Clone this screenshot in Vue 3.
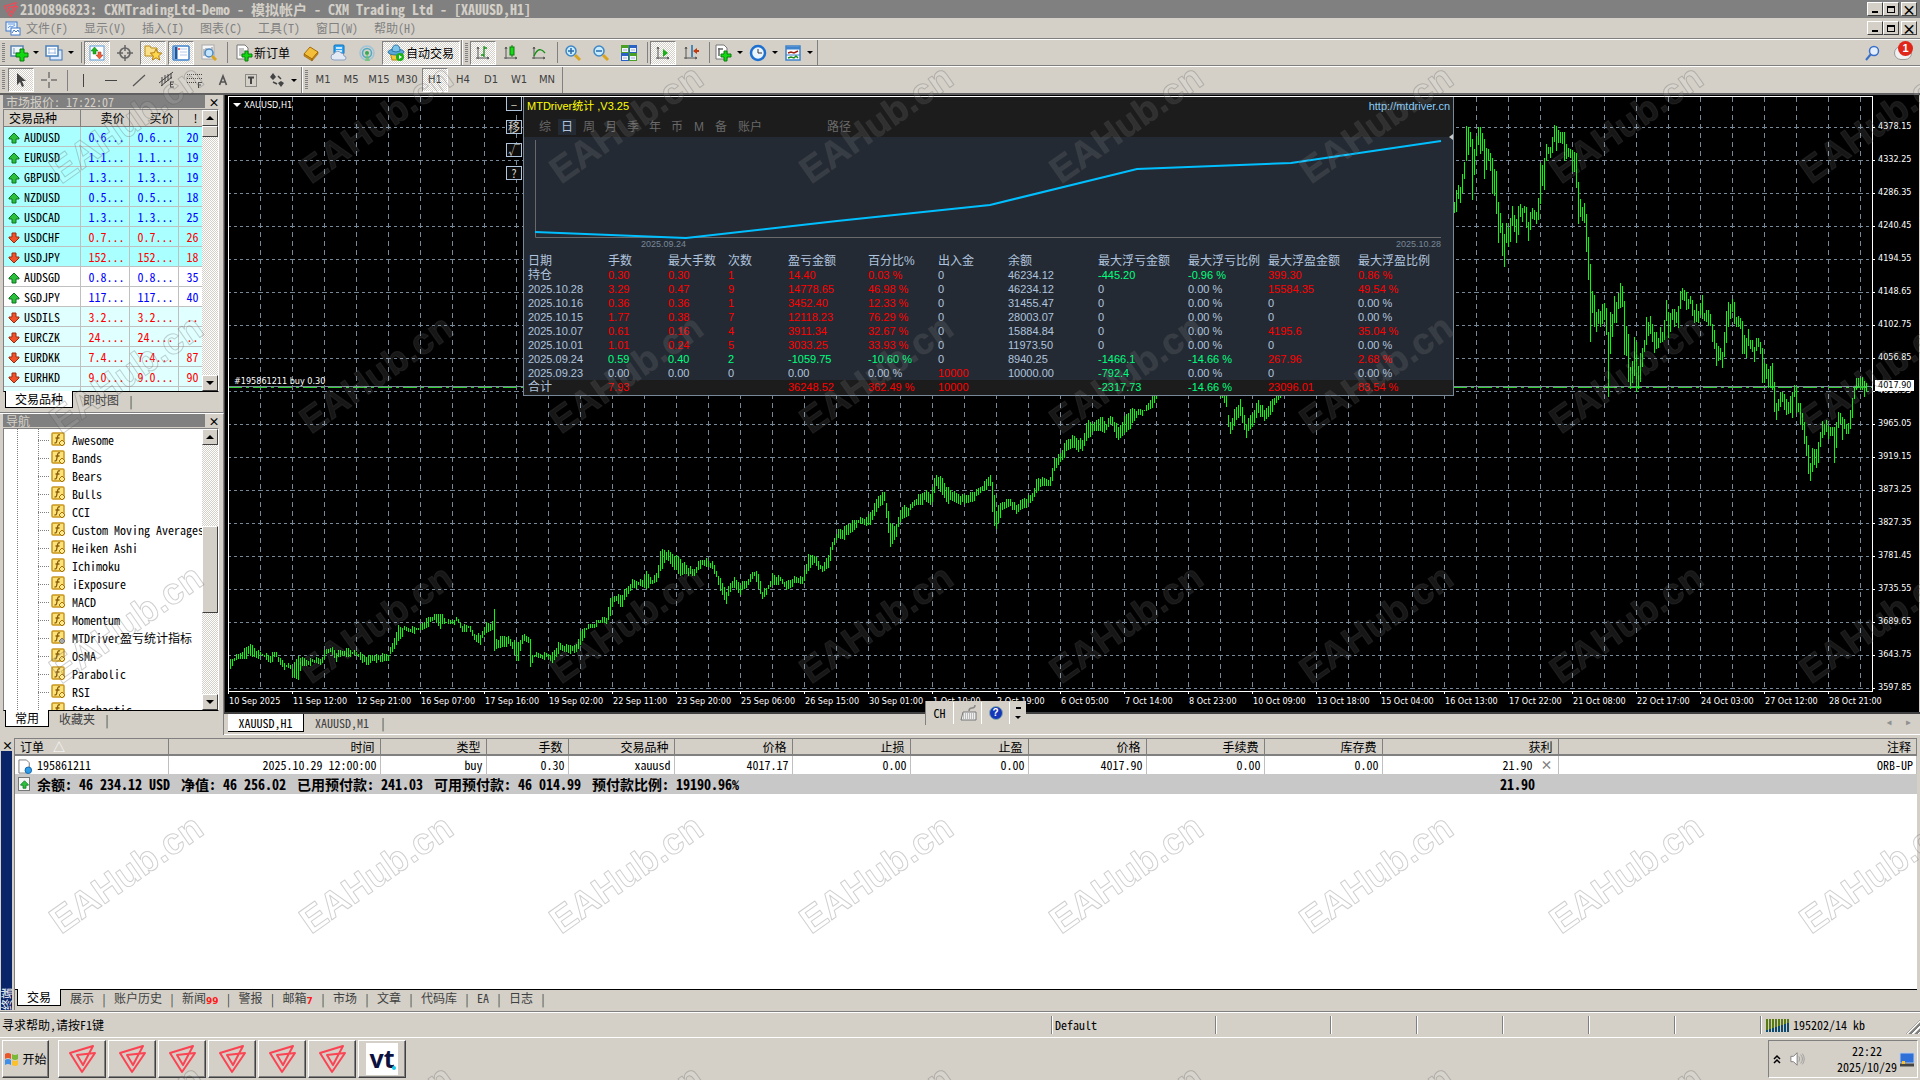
<script setup>
const axes = '<path d="M3 2v12M1 13h13M2 4l1-2 1 2M12 12l2 1-2 1" fill="none" stroke="#555"/>'
const icons = {
  doc: '<rect x="1" y="2" width="11" height="9" fill="#e8f2ff" stroke="#3f78c8"/><path d="M3 4h7M3 8l2-2 2 1 3-2" stroke="#6a9be0" fill="none"/><rect x="6" y="8" width="9" height="7" fill="#fff" stroke="#3f78c8"/><path d="M7 13l2-3 2 2 2-2 1 2" stroke="#3f78c8" fill="none"/>',
  newchart: '<rect x="0" y="1" width="12" height="10" fill="#eef5fc" stroke="#5b84ae" stroke-width="1.500"/><path d="M3 3v6M2 8h8" stroke="#7f9cb8" fill="none"/><path d="M9 4h4v4h4v4h-4v4H9v-4H5V8h4z" fill="#12d812" stroke="#0a7d0a"/>',
  profiles: '<rect x="4" y="5" width="12" height="10" fill="#dceafb" stroke="#3e74b4"/><rect x="0" y="1" width="12" height="10" fill="#fff" stroke="#4a80bc" stroke-width="1.500"/><path d="M2 4h8M2 8h8M3 3v6M9 3v6" stroke="#9dbbe0"/>',
  market: '<rect x="1" y="1" width="14" height="14" fill="#fff" stroke="#5a9bd8"/><path d="M5.500 2l3.500 4H7v3H4V6H2z" fill="#1fb31f" stroke="#0b7d0b" stroke-width=".5"/><path d="M10.500 14l3.500-4h-2V7H9v3H7z" fill="#f0603a" stroke="#a03010" stroke-width=".5"/>',
  target: '<circle cx="8" cy="8" r="5" fill="none" stroke="#666" stroke-width="1.700"/><path d="M8 0v6M8 10v6M0 8h6M10 8h6" stroke="#666" stroke-width="1.500"/>',
  folder: '<path d="M0 1h5l1 2h6v8H0z" fill="#fbe08a" stroke="#b98d1d"/><path d="M11 4l1.700 3.700 4 .4-3 2.700.9 4.200-3.600-2.200-3.600 2.200.9-4.200-3-2.700 4-.4z" fill="#ffd84a" stroke="#b07d10"/>',
  terminal: '<rect x="0" y="1" width="16" height="14" rx="1" fill="#fff" stroke="#3e83cc" stroke-width="1.500"/><path d="M3 2v12" stroke="#1b57a0" stroke-width="3"/><path d="M7 4h7M7 7h7M7 10h7" stroke="#b6c9ea"/><circle cx="6" cy="4" r="1" fill="#e33"/>',
  tester: '<rect x="1" y="0" width="12" height="14" fill="#f6f6f6" stroke="#aaa"/><path d="M3 4v7M5 3v5M11 2v4" stroke="#888"/><circle cx="8" cy="8" r="4" fill="#bfe3ff" fill-opacity=".9" stroke="#4b87c0" stroke-width="1.500"/><path d="M11 11l4 4" stroke="#d9a520" stroke-width="3"/>',
  order: '<path d="M1 0h8l3 3v11H1z" fill="#fff" stroke="#777"/><path d="M3 4h5M3 6h6M3 8h6M3 10h4" stroke="#888"/><path d="M9 6h3v3h4v3h-4v4H9v-4H6V9h3z" fill="#12d812" stroke="#0a7d0a"/>',
  book: '<path d="M1 9l6-7 8 5-6 7z" fill="#f3bf3a" stroke="#a46c08"/><path d="M1 9v2l8 5v-2zM9 14l6-7v2l-6 7z" fill="#c98a16" stroke="#8d5b06" stroke-width=".5"/>',
  vps: '<rect x="3" y="0" width="10" height="9" rx="1" fill="#2fa4f2" stroke="#1470b8"/><path d="M5 3h6M5 6h6" stroke="#fff" stroke-width="1.500"/><path d="M3 15a3 3 0 010-6 4 4 0 017-1 3 3 0 013 3 2 2 0 010 4z" fill="#e4eaf4" stroke="#8ba0c0"/>',
  signal: '<g fill="none" stroke-width="1.500"><circle cx="8" cy="8" r="7" stroke="#9dc4d8"/><circle cx="8" cy="8" r="4.500" stroke="#4fa9c2"/></g><circle cx="8" cy="8" r="2" fill="#34a853"/><path d="M8 8l-2 8h5z" fill="#6cc06c" fill-opacity=".8"/>',
  auto: '<path d="M2 7h12l-2 8H4z" fill="#f4c93c" stroke="#b18513"/><ellipse cx="8" cy="7" rx="8" ry="3" fill="#58a8d8" stroke="#2d76a8"/><path d="M4 6q0-6 4-6t4 6q-4 2-8 0z" fill="#7cc4ea" stroke="#2d76a8"/><circle cx="12" cy="12" r="4" fill="#17b317"/><path d="M11 10l3 2-3 2z" fill="#fff"/>',
  bars: axes + '<path d="M9 1v11M9 3h3M6 10h3" stroke="#159015" stroke-width="1.300" fill="none"/>',
  candle: axes + '<path d="M9 0v12" stroke="#0a7d0a"/><rect x="7" y="2" width="4" height="8" fill="#19d819" stroke="#0a7d0a"/>',
  line: axes + '<path d="M3 11Q8 0 14 8" fill="none" stroke="#159015" stroke-width="1.300"/>',
  zoomin: '<circle cx="6" cy="6" r="5" fill="#c8ebff" stroke="#3f86c4" stroke-width="1.500"/><path d="M3 6h6M6 3v6" stroke="#2a6ca8" stroke-width="1.500"/><path d="M10 10l5 5" stroke="#d9a520" stroke-width="3"/>',
  zoomout: '<circle cx="6" cy="6" r="5" fill="#c8ebff" stroke="#3f86c4" stroke-width="1.500"/><path d="M3 6h6" stroke="#2a6ca8" stroke-width="1.500"/><path d="M10 10l5 5" stroke="#d9a520" stroke-width="3"/>',
  tile: '<rect x="0" y="0" width="8" height="8" fill="#4aa023"/><rect x="8" y="0" width="8" height="8" fill="#2a62c8"/><rect x="0" y="8" width="8" height="8" fill="#2a62c8"/><rect x="8" y="8" width="8" height="8" fill="#4aa023"/><path d="M1 3h6v4H1zM9 3h6v4H9zM1 11h6v4H1zM9 11h6v4H9z" fill="#eef6ff"/><path d="M2 5h4M10 5h4M2 13h4M10 13h4" stroke="#aac"/>',
  scroll: axes + '<path d="M8 4l5 4-5 4z" fill="#18b018"/>',
  shift: axes + '<path d="M9 0v12" stroke="#1b6fb0" stroke-width="1.500"/><path d="M10 6l4-3v2h2v2h-2v2z" fill="#c03a10"/>',
  indic: '<path d="M1 0h8l3 3v11H1z" fill="#fff" stroke="#777"/><path d="M4 3v8M3 4h5" stroke="#666" stroke-width="1.500"/><path d="M9 6h3v3h4v3h-4v4H9v-4H6V9h3z" fill="#12d812" stroke="#0a7d0a"/>',
  clock: '<circle cx="8" cy="8" r="7" fill="#eaf5ff" stroke="#1d6fd0" stroke-width="2.500"/><path d="M8 4v4h4" stroke="#333" fill="none"/>',
  template: '<rect x="1" y="1" width="14" height="14" fill="#fff" stroke="#3e83cc" stroke-width="1.500"/><path d="M1 3h14" stroke="#3e83cc" stroke-width="3"/><path d="M3 8l3-1 3 1 4-2" stroke="#a02010" stroke-width="1.500" fill="none"/><path d="M1 10h14" stroke="#3e83cc"/><path d="M3 13l3-1 3 1 2-2 2 2" stroke="#1a8a1a" stroke-width="1.500" fill="none"/>',
  cursor: '<path d="M4 1v12l3-3 2 5 2-1-2-5h4z" fill="#444"/>',
  cross: '<path d="M8 0v6M8 10v6M0 8h6M10 8h6" stroke="#444"/>',
  vline: '<path d="M8.500 2v13" stroke="#444"/>',
  hline: '<path d="M2 8.500h12" stroke="#444"/>',
  trend: '<path d="M2 14L14 3" stroke="#555" stroke-width="1.200"/>',
  channel: '<path d="M0 11L14 0M2 14L13 5M3 5v9M6 3v8M9 2v7M12 1v6" stroke="#444" fill="none"/><path d="M11 10h4M11 12.500h3M11 15h4M11.500 10v5" stroke="#444" fill="none"/>',
  fibo: '<path d="M0 2.500h15M0 6.500h15M0 10.500h9" stroke="#444" stroke-dasharray="1 1"/><path d="M11 10.500h4M11 13h3M11.500 10v6" stroke="#444" fill="none"/>',
  letter: '<path d="M4.500 13L8 4l3.500 9M6 10h4" stroke="#555" stroke-width="1.700" fill="none"/>',
  label: '<rect x="2.500" y="2.500" width="11" height="12" fill="none" stroke="#444" stroke-dasharray="1 1"/><path d="M5 5.500h6M8 5v7" stroke="#444" stroke-width="2"/>',
  shapes: '<path d="M1 5l3-4 3 4-3 3zM15 11l-3 4-3-4 3-2z" fill="#444"/><path d="M4 10l4 2M9 4l3 3" stroke="#444" stroke-width="1.500"/>',
  search: '<circle cx="10" cy="6" r="4.500" fill="#e4eeff" stroke="#3a6fc8" stroke-width="1.500"/><path d="M7 9l-5 6" stroke="#3a6fc8" stroke-width="2"/>',
  up: '<path d="M6 1l5 5v1H8v4H4V7H1V6z" fill="#2cbf3c" stroke="#0a7020"/>',
  down: '<path d="M6 11l5-5V5H8V1H4v4H1v1z" fill="#f0522c" stroke="#9c2c10"/>',
  logo: '<path d="M2 8L25 1 15 20 9 10 27 8 14 27Z" fill="none" stroke="#fb4453" stroke-width="2" stroke-linejoin="round"/>',
  speaker: '<path d="M1 5h3l4-4v14l-4-4H1z" fill="#fff" stroke="#777"/><path d="M10 5q2 3 0 6M12 3q4 5 0 10M14 2q4 6 0 12" fill="none" stroke="#999"/>',
  flag: '<path d="M1 3q3-2 6 0v5q-3-2-6 0z" fill="#e8562a"/><path d="M8 3q3 2 6 0v5q-3 2-6 0z" fill="#7ab837"/><path d="M1 9q3-2 6 0v5q-3-2-6 0z" fill="#3f8ee8"/><path d="M8 9q3 2 6 0v5q-3 2-6 0z" fill="#fbc02d"/>',
  keyboard: '<path d="M3 7h13v8H1z" fill="#eee" stroke="#777"/><path d="M3 9h11M3 11h11M3 13h11" stroke="#888" stroke-dasharray="1 1"/><path d="M9 6q0-3 3-3t3-3" stroke="#888" stroke-width="1.500" fill="none"/>',
  order1: '<path d="M1 1h8l3 3v11H1z" fill="#fff" stroke="#777"/><circle cx="11" cy="12" r="3.500" fill="#2f9ce8" stroke="#1262a8"/>',
  chev: '<path d="M2 6l3-3 3 3M2 10l3-3 3 3" fill="none" stroke="#000" stroke-width="1.500"/>',
  monitor: '<rect x="1" y="2" width="14" height="10" fill="#2f6fd8" stroke="#b9cbe6"/><path d="M1 14h14" stroke="#444" stroke-width="3"/><rect x="3" y="10" width="3" height="3" fill="#fbc02d"/>'
}
const fbase = '<rect x="1" y="1" width="12" height="12" rx="1" fill="#fbe27a" stroke="#c9961c" stroke-width="1.500"/><path d="M9 3q-2-1-2.500 2l-1 5q0 1-2 1M4.500 6h4" fill="none" stroke="#8a5d08" stroke-width="1.300"/>'
icons.fn = fbase + '<path d="M11 8l3 3-3 3-3-3z" fill="#ffe98c" stroke="#a87408"/>'
icons.fng = fbase + '<path d="M11 8l3 3-3 3-3-3z" fill="#aaa" stroke="#777"/>'

const menus = ['文件(F)', '显示(V)', '插入(I)', '图表(C)', '工具(T)', '窗口(W)', '帮助(H)']
const bar1 = [
  { i: 'newchart', m: 1 }, { i: 'profiles', m: 1 }, { s: 1 },
  { i: 'market', on: 1 }, { i: 'target' }, { i: 'folder', on: 1 }, { i: 'terminal', on: 1 }, { i: 'tester' }, { s: 1 },
  { i: 'order', t: '新订单' }, { i: 'book' }, { i: 'vps' }, { i: 'signal' }, { i: 'auto', t: '自动交易', on: 1 }
]
const bar2 = [
  { i: 'bars', on: 1 }, { i: 'candle' }, { i: 'line' }, { s: 1 }, { i: 'zoomin' }, { i: 'zoomout' }, { i: 'tile' }, { s: 1 },
  { i: 'scroll', on: 1 }, { i: 'shift' }, { s: 1 }, { i: 'indic', m: 1 }, { i: 'clock', m: 1 }, { i: 'template', m: 1 }
]
const bar3 = [
  { i: 'cursor', on: 1 }, { i: 'cross' }, { s: 1 }, { i: 'vline' }, { i: 'hline' }, { i: 'trend' }, { i: 'channel' },
  { i: 'fibo' }, { i: 'letter' }, { i: 'label' }, { i: 'shapes', m: 1 }
]
const frames = ['M1', 'M5', 'M15', 'M30', 'H1', 'H4', 'D1', 'W1', 'MN']

const quotes = [
  ['AUDUSD', '0.6...', '0.6...', '20', 1, 'a'], ['EURUSD', '1.1...', '1.1...', '19', 1, 'a'],
  ['GBPUSD', '1.3...', '1.3...', '19', 1, 'a'], ['NZDUSD', '0.5...', '0.5...', '18', 1, 'a'],
  ['USDCAD', '1.3...', '1.3...', '25', 1, 'a'], ['USDCHF', '0.7...', '0.7...', '26', 0, 'a'],
  ['USDJPY', '152...', '152...', '18', 0, 'a'], ['AUDSGD', '0.8...', '0.8...', '35', 1, 'b'],
  ['SGDJPY', '117...', '117...', '40', 1, 'b'], ['USDILS', '3.2...', '3.2...', '..', 0, 'c'],
  ['EURCZK', '24....', '24....', '..', 0, 'c'], ['EURDKK', '7.4...', '7.4...', '87', 0, 'c'],
  ['EURHKD', '9.0...', '9.0...', '90', 0, 'c']
]
const tree = ['Awesome', 'Bands', 'Bears', 'Bulls', 'CCI', 'Custom Moving Averages', 'Heiken Ashi', 'Ichimoku', 'iExposure',
  'MACD', 'Momentum', 'MTDriver盈亏统计指标', 'OsMA', 'Parabolic', 'RSI', 'Stochastic']

const prices = Array.from({ length: 18 }, (_, k) => (4378.15 - 45.9 * k).toFixed(2))
const dates = ['10 Sep 2025', '11 Sep 12:00', '12 Sep 21:00', '16 Sep 07:00', '17 Sep 16:00', '19 Sep 02:00', '22 Sep 11:00',
  '23 Sep 20:00', '25 Sep 06:00', '26 Sep 15:00', '30 Sep 01:00', '1 Oct 10:00', '2 Oct 19:00', '6 Oct 05:00', '7 Oct 14:00',
  '8 Oct 23:00', '10 Oct 09:00', '13 Oct 18:00', '15 Oct 04:00', '16 Oct 13:00', '17 Oct 22:00', '21 Oct 08:00',
  '22 Oct 17:00', '24 Oct 03:00', '27 Oct 12:00', '28 Oct 21:00']

const early = `228,661,672 232,658,664 238,654,660 248,645,656 252,645,657 257,650,657 263,653,657 269,655,662 276,651,658 279,658,664
284,662,668 290,665,670 292,668,677 298,655,678 302,658,667 309,659,664 321,658,664 324,651,657 330,646,652 336,652,660 342,650,657
349,648,655 358,653,657 367,656,667 373,654,659 380,655,663 388,653,659 393,641,652 397,626,642 404,627,632 416,627,632 422,623,630
428,617,625 434,615,620 440,612,627 446,621,624 457,618,622 462,624,632 468,625,630 474,633,640 480,635,643 485,623,634 492,622,628
494,609,653 496,638,650 498,638,649 505,634,645 511,640,647 517,643,663 523,634,642 528,635,642 530,640,666 532,655,661 535,653,658
544,653,658 552,653,663 558,643,652 566,645,652 572,644,653 575,646,655 581,630,642 587,625,630 597,620,625 606,617,623 609,600,617
615,594,600 621,595,607 626,588,598 632,580,587 642,580,587 645,571,588 652,578,585 657,572,581 660,549,570 667,551,560 673,554,567
679,557,577 685,564,572 693,570,578 699,560,567 704,558,567 713,563,568 719,577,590 726,590,602 733,578,587 740,583,593 746,580,588
753,570,575 759,575,592 762,590,598 767,587,592 772,574,585 780,577,583 786,582,590 792,577,585 802,577,583 808,555,572 814,554,562
822,567,573 828,553,567 832,542,552 837,530,538 843,528,538 849,522,535 857,518,525 866,518,525 872,508,522 879,493,505 884,492,503
887,507,527 890,523,547 896,525,535 901,505,520 909,507,513 915,498,505 924,490,502 931,493,505 935,474,487 942,478,495 947,487,502
955,493,502 964,495,505 976,490,498 983,483,490 990,473,487 993,487,525 996,510,528 1001,502,513 1010,498,505 1016,505,515
1023,498,507 1031,495,503 1037,477,490 1043,478,487 1050,478,485 1054,457,473 1060,453,462 1066,440,453 1073,435,447 1082,440,452
1087,420,438 1094,423,432 1100,415,430 1106,423,432 1111,415,423 1118,427,442 1125,415,432 1132,408,425 1138,410,415 1145,408,413
1152,395,407 1158,380,392 1218,380,392 1226,396,408 1229,424,436 1234,410,424 1240,400,416 1246,422,436 1252,412,428 1258,400,412
1264,410,422 1270,402,414 1276,394,404 1284,380,392 1340,330,350 1400,270,290 1440,230,246 1454,202,213`
  .split(/\s+/).map(s => s.split(',').map(Number))
const late = `202,213 190,212 185,199 187,203 174,193 162,179 126,161 127,155 132,147 139,200 149,175 136,156 127,145 127,154 133,151
139,179 148,170 149,161 153,171 158,194 169,196 171,214 202,243 213,233 223,256 234,267 223,243 228,247 218,242 206,226 215,232
219,243 206,235 204,217 208,222 206,213 207,228 222,241 212,230 208,219 210,220 212,224 198,220 163,204 165,186 158,190 144,161
147,154 147,158 137,153 125,142 126,151 130,143 132,143 132,144 132,161 144,159 148,157 149,158 150,172 152,172 153,188 182,224
199,217 207,221 203,223 214,252 237,280 264,342 291,313 295,327 312,332 309,324 311,327 304,324 303,320 308,335 332,397 312,354
314,337 296,323 302,323 293,309 283,308 286,307 301,355 326,356 334,382 367,389 361,383 337,376 342,392 366,389 353,382 348,367
340,352 317,345 322,336 316,334 324,342 332,353 332,349 338,348 327,343 332,342 320,340 300,321 312,338 313,332 309,320 309,327
312,323 306,328 291,309 288,300 290,301 292,310 299,309 296,304 300,316 310,323 304,322 311,323 303,315 295,319 313,321 310,322
310,326 314,326 324,342 330,349 343,366 346,361 348,360 352,368 332,357 311,343 302,327 304,319 299,312 302,324 317,327 316,327
318,329 321,354 335,354 338,358 329,346 340,349 340,352 347,362 338,351 338,347 342,354 348,383 363,383 364,379 369,388 366,388
363,390 382,412 403,420 399,411 392,407 392,402 394,410 399,415 402,414 396,413 392,418 385,397 388,413 403,412 403,425 413,430
422,444 436,456 445,474 463,481 448,472 449,465 449,468 442,463 432,447 421,438 424,435 420,432 426,439 427,436 427,436 427,463
422,448 412,428 413,424 417,440 419,429 424,434 423,434 410,429 398,418 387,399 378,390 378,387 378,390 377,390 381,397 383,392`
  .split(/\s+/).map(s => s.split(',').map(Number))

let path = ''
let k = 0
for (let x = 228; x < 1454; x += 2) {
  while (early[k + 1][0] <= x) k++
  const [x0, a0, b0] = early[k]
  const [x1, a1, b1] = early[k + 1]
  const f = (x - x0) / (x1 - x0)
  const up = Math.round(a0 + (a1 - a0) * f - ((x * 37) % 11) / 3 + 2)
  const lo = Math.round(b0 + (b1 - b0) * f + ((x * 53) % 13) / 3 - 2)
  path += `M${x}.5 ${up}V${lo}`
}
late.forEach(([a, b], n) => { path += `M${1454 + n * 2}.5 ${a}V${b}` })

const statHead = ['日期', '手数', '最大手数', '次数', '盈亏金额', '百分比%', '出入金', '余额', '最大浮亏金额', '最大浮亏比例', '最大浮盈金额', '最大浮盈比例']
const stats = [
  ['持仓', '0.30', '0.30', '1', '14.40', '0.03 %', '0', '46234.12', '-445.20', '-0.96 %', '399.30', '0.86 %'],
  ['2025.10.28', '3.29', '0.47', '9', '14778.65', '46.98 %', '0', '46234.12', '0', '0.00 %', '15584.35', '49.54 %'],
  ['2025.10.16', '0.36', '0.36', '1', '3452.40', '12.33 %', '0', '31455.47', '0', '0.00 %', '0', '0.00 %'],
  ['2025.10.15', '1.77', '0.38', '7', '12118.23', '76.29 %', '0', '28003.07', '0', '0.00 %', '0', '0.00 %'],
  ['2025.10.07', '0.61', '0.16', '4', '3911.34', '32.67 %', '0', '15884.84', '0', '0.00 %', '4195.6', '35.04 %'],
  ['2025.10.01', '1.01', '0.24', '5', '3033.25', '33.93 %', '0', '11973.50', '0', '0.00 %', '0', '0.00 %'],
  ['2025.09.24', '0.59', '0.40', '2', '-1059.75', '-10.60 %', '0', '8940.25', '-1466.1', '-14.66 %', '267.96', '2.68 %'],
  ['2025.09.23', '0.00', '0.00', '0', '0.00', '0.00 %', '10000', '10000.00', '-792.4', '0.00 %', '0', '0.00 %'],
  ['合计', '7.93', '', '', '36248.52', '362.49 %', '10000', '', '-2317.73', '-14.66 %', '23096.01', '83.54 %']
]
function tone(row, c) {
  const v = row[c]
  if (c === 0 || c === 7 || parseFloat(v) === 0) return ''
  if (v.startsWith('-') || (c < 4 && row[4].startsWith('-'))) return 'neg'
  return 'pos'
}
const statTabs = ['综', '日', '周', '月', '季', '年', '币', 'M', '备', '账户', '路径']

const orderCols = ['订单', '时间', '类型', '手数', '交易品种', '价格', '止损', '止盈', '价格', '手续费', '库存费', '获利', '注释']
const orderRow = ['195861211', '2025.10.29 12:00:00', 'buy', '0.30', 'xauusd', '4017.17', '0.00', '0.00', '4017.90', '0.00', '0.00', '21.90', 'ORB-UP']
const summary = ['余额: 46 234.12 USD', '净值: 46 256.02', '已用预付款: 241.03', '可用预付款: 46 014.99', '预付款比例: 19190.96%']
const termTabs = [['展示'], ['账户历史'], ['新闻', '99'], ['警报'], ['邮箱', '7'], ['市场'], ['文章'], ['代码库'], ['EA'], ['日志']]
</script>

<template>
  <div class="app">
    <header class="title">
      <svg class="mark" viewBox="0 0 28 28" v-html="icons.logo"></svg>
      <h1>2100896823: CXMTradingLtd-Demo - 模拟帐户 - CXM Trading Ltd - [XAUUSD,H1]</h1>
      <div class="winbtns"><button aria-label="最小化"><i class="min"></i></button><button aria-label="还原"><i class="res"></i></button><button aria-label="关闭">×</button></div>
    </header>
    <nav class="menu">
      <svg class="ic" viewBox="0 0 16 16" v-html="icons.doc"></svg>
      <button v-for="m in menus" :key="m">{{ m }}</button>
      <div class="winbtns"><button aria-label="最小化图表"><i class="min"></i></button><button aria-label="还原图表"><i class="res"></i></button><button aria-label="关闭图表">×</button></div>
    </nav>

    <div class="bars">
      <div class="bar">
        <div v-for="(g, gi) in [bar1, bar2]" :key="gi" class="group">
          <span class="grip"></span>
          <template v-for="(b, n) in g" :key="n">
            <span v-if="b.s" class="sep"></span>
            <button v-else class="tb" :class="{ on: b.on, drop: b.m, txt: b.t }" :aria-label="b.t || b.i">
              <svg class="ic" viewBox="0 0 16 16" v-html="icons[b.i]"></svg><span v-if="b.t">{{ b.t }}</span><i v-if="b.m" class="caret"></i>
            </button>
          </template>
        </div>
        <div class="tools">
          <button aria-label="搜索"><svg class="ic" viewBox="0 0 16 16" v-html="icons.search"></svg></button>
          <button aria-label="消息" class="chat"><b>1</b></button>
        </div>
      </div>
      <div class="bar">
        <div class="group">
          <span class="grip"></span>
          <template v-for="(b, n) in bar3" :key="n">
            <span v-if="b.s" class="sep"></span>
            <button v-else class="tb" :class="{ on: b.on, drop: b.m }" :aria-label="b.i">
              <svg class="ic" viewBox="0 0 16 16" v-html="icons[b.i]"></svg><i v-if="b.m" class="caret"></i>
            </button>
          </template>
        </div>
        <div class="group">
          <span class="grip"></span>
          <button v-for="f in frames" :key="f" class="tb tf" :class="{ on: f === 'H1' }">{{ f }}</button>
        </div>
      </div>
    </div>

    <main class="main">
      <aside class="side">
        <section class="market">
          <div class="cap"><h2>市场报价: 17:22:07</h2><button aria-label="关闭市场报价">×</button></div>
          <div class="box">
            <div class="clip">
              <table class="quotes">
                <colgroup><col class="q1"><col class="q2"><col class="q2"><col class="q4"></colgroup>
                <thead><tr><th>交易品种</th><th>卖价</th><th>买价</th><th>!</th></tr></thead>
                <tbody>
                  <tr v-for="q in quotes" :key="q[0]" :class="[q[5], q[4] ? 'blue' : 'red']">
                    <td><svg class="arr" viewBox="0 0 12 12" v-html="q[4] ? icons.up : icons.down"></svg>{{ q[0] }}</td>
                    <td>{{ q[1] }}</td><td>{{ q[2] }}</td><td>{{ q[3] }}</td>
                  </tr>
                  <tr class="c"><td></td><td></td><td></td><td></td></tr>
                </tbody>
              </table>
            </div>
            <div class="scroll"><button aria-label="向上"><i class="u"></i></button><span class="thumb t1"></span><button class="end" aria-label="向下"><i class="d"></i></button></div>
          </div>
          <div class="tabs"><button class="cur">交易品种</button><button>即时图</button><span>|</span></div>
        </section>
        <section class="navi">
          <div class="cap"><h2>导航</h2><button aria-label="关闭导航">×</button></div>
          <div class="box">
            <ul class="tree">
              <li v-for="t in tree" :key="t"><i class="dots"></i><svg class="ic" viewBox="0 0 16 16" v-html="t.startsWith('MTD') ? icons.fng : icons.fn"></svg><span>{{ t }}</span></li>
            </ul>
            <div class="scroll"><button aria-label="向上"><i class="u"></i></button><span class="thumb t2"></span><button class="end" aria-label="向下"><i class="d"></i></button></div>
          </div>
          <div class="tabs"><button class="cur">常用</button><button>收藏夹</button><span>|</span></div>
        </section>
      </aside>

      <section class="work">
        <div class="chart">
          <div class="upper">
            <div class="plot">
              <svg class="canvas">
                <defs>
                  <pattern id="grid" width="32" height="33" patternUnits="userSpaceOnUse" x="228" y="127">
                    <path d="M0 .5H32" stroke="#778899" stroke-dasharray="3 3" />
                  </pattern>
                </defs>
                <g transform="translate(-229 -97)" shape-rendering="crispEdges">
                  <rect x="228" y="97" width="2400" height="1200" fill="url(#grid)" />
                  <path v-for="n in 75" :key="n" :d="`M${228.5 + n * 32} 97V1600`" stroke="#778899" stroke-dasharray="5 4" />
                  <path d="M228 386.500H3000" stroke="#778899" />
                  <path d="M228 387.500H3000" stroke="#32cd32" stroke-dasharray="14 4 3 4" />
                  <path :d="path" stroke="#00ff00" fill="none" />
                </g>
              </svg>
              <div class="sym"><i></i>XAUUSD,H1</div>
              <div class="pos-label">#195861211 buy 0.30</div>

              <div class="sidebtns"><button>–</button><button>移</button><button>√</button><button>?</button></div>
              <section class="panel">
                <header>
                  <div class="ptitle"><h3>MTDriver统计 ,V3.25</h3><a href="http://mtdriver.cn">http://mtdriver.cn</a></div>
                  <div class="ptabs"><button v-for="t in statTabs" :key="t" :class="{ cur: t === '日', wide: t.length > 1, far: t === '路径' }">{{ t }}</button></div>
                </header>
                <svg class="curve" viewBox="525 137 929 102" preserveAspectRatio="none">
                  <path d="M536.500 140V237.500H1442" fill="none" stroke="#696969" />
                  <path d="M536 232L687 238 838 221 991 205 1138 169 1292 163 1442 141" fill="none" stroke="#00bfff" stroke-width="2" />
                </svg>
                <div class="pdates"><span>2025.09.24</span><span>2025.10.28</span></div>
                <table class="stats">
                  <colgroup><col v-for="(h, n) in statHead" :key="h" :class="'s' + n"></colgroup>
                  <thead><tr><th v-for="h in statHead" :key="h">{{ h }}</th></tr></thead>
                  <tbody><tr v-for="r in stats" :key="r[0]"><td v-for="(v, c) in r" :key="c" :class="tone(r, c)">{{ v }}</td></tr></tbody>
                </table>
                <i class="nub"></i>
              </section>
            </div>
            <div class="prices">
              <span v-for="p in prices" :key="p">{{ p }}</span>
              <strong>4017.90</strong>
            </div>
          </div>
          <div class="dates"><span v-for="d in dates" :key="d">{{ d }}</span></div>
          <div class="ime">
            <button>CH</button><button aria-label="键盘"><svg class="ic" viewBox="0 0 16 16" v-html="icons.keyboard"></svg></button><button aria-label="帮助"><b>?</b></button><span class="imeopt"><i></i><i class="caret"></i></span>
          </div>
        </div>
        <div class="ctabs"><button class="cur">XAUUSD,H1</button><button>XAUUSD,M1</button><span>|</span><em>◂&nbsp; ▸</em></div>
      </section>
    </main>

    <section class="term">
      <div class="strip"><button aria-label="关闭终端">×</button><div class="vcap">终端</div></div>
      <div class="tbody">
        <table class="orders">
          <colgroup><col v-for="n in 13" :key="n" :class="'o' + n"></colgroup>
          <thead><tr><th v-for="(c, n) in orderCols" :key="n">{{ c }}<i v-if="n === 0">△</i></th></tr></thead>
          <tbody>
            <tr><td v-for="(v, n) in orderRow" :key="n"><svg v-if="n === 0" class="ic" viewBox="0 0 16 16" v-html="icons.order1"></svg>{{ v }}<button v-if="n === 11" aria-label="平仓">×</button></td></tr>
            <tr class="sum">
              <td colspan="11"><div><span class="upbox"><svg viewBox="0 0 12 12" v-html="icons.up"></svg></span><span v-for="s in summary" :key="s">{{ s }}</span></div></td>
              <td>21.90</td><td></td>
            </tr>
          </tbody>
        </table>
        <div class="fill"></div>
        <div class="tabs wide"><button class="cur">交易</button><template v-for="t in termTabs" :key="t[0]"><button>{{ t[0] }}<sub v-if="t[1]">{{ t[1] }}</sub></button><span>|</span></template></div>
      </div>
    </section>

    <footer class="status">
      <span class="help">寻求帮助,请按F1键</span><span class="prof">Default</span><span class="w1"></span><span class="w2"></span><span class="w2"></span><span class="w2"></span><span class="w2"></span><span class="w2"></span>
      <span class="conn"><svg viewBox="0 0 24 13"><path v-for="n in 8" :key="n" :d="`M${n * 3 - 2} 0V${12 - n}`" stroke="#5a7a14" stroke-width="2" /><path v-for="n in 8" :key="-n" :d="`M${n * 3 - 2} ${12 - n}V13`" stroke="#0c4a70" stroke-width="2" /></svg>195202/14 kb</span>
    </footer>

    <footer class="task">
      <button class="start"><svg class="ic" viewBox="0 0 16 16" v-html="icons.flag"></svg>开始</button>
      <button v-for="n in 6" :key="n" class="app-btn" :aria-label="'终端 ' + n"><svg viewBox="0 0 28 28" v-html="icons.logo"></svg></button>
      <button class="app-btn"><span class="vt">vt<i></i></span></button>
      <div class="tray">
        <svg class="chev" viewBox="0 0 10 13" v-html="icons.chev"></svg><svg class="ic" viewBox="0 0 18 16" v-html="icons.speaker"></svg>
        <time>22:22<br>2025/10/29</time>
        <svg class="ic" viewBox="0 0 16 16" v-html="icons.monitor"></svg>
      </div>
    </footer>

    <svg class="mark-layer" aria-hidden="true">
      <defs><pattern id="wm" x="2" width="250" height="250" patternUnits="userSpaceOnUse"><text x="125" y="136" text-anchor="middle" transform="rotate(-35 125 125)">EAHub.cn</text></pattern></defs>
      <rect width="100%" height="100%" fill="url(#wm)" />
    </svg>
  </div>
</template>

<style>
body { margin: 0; background: #d4d0c8; overflow: hidden; }
</style>

<style scoped>
.app { display: flex; flex-direction: column; height: 100vh; background: #d4d0c8; color: #000; font: 12px/14px "Noto Sans Mono CJK SC", "Noto Sans CJK SC", "Liberation Mono", monospace; overflow: hidden; }
.app *, .app *::before, .app *::after { box-sizing: border-box; }
button { font: inherit; color: inherit; background: none; border: 0; padding: 0; margin: 0; display: inline-flex; align-items: center; justify-content: center; white-space: nowrap; }
h1, h2, h3 { font: inherit; margin: 0; white-space: nowrap; }
.ic { width: 16px; height: 16px; flex: none; display: block; overflow: visible; }
.app :deep(svg) { flex: none; }
table { border-collapse: collapse; table-layout: fixed; }
th { font-weight: 400; }

.title { display: flex; align-items: center; height: 18px; background: #808080; color: #d4d0c8; padding: 0 3px; flex: none; }
.title h1 { font-size: 14px; font-weight: 700; line-height: 18px; flex: 1; margin-left: 2px; }
.mark { width: 15px; height: 15px; }
.winbtns { display: flex; margin-left: auto; color: #000; }
.winbtns button { width: 16px; height: 14px; background: #d4d0c8; border: 1px solid; border-color: #fff #404040 #404040 #fff; font-size: 14px; font-weight: 700; line-height: 10px; }
.winbtns button:last-child { margin-left: 2px; }
.min { width: 6px; height: 2px; background: #000; margin-top: 6px; }
.res { width: 8px; height: 7px; border: 1px solid #000; border-top-width: 2px; }
.menu { display: flex; align-items: center; height: 20px; padding: 0 3px; flex: none; color: #808080; }
.menu > .ic { margin: 0 5px 0 2px; }
.menu > button { margin-right: 16px; }

.bars { flex: none; border-top: 1px solid #808080; border-bottom: 2px solid #606060; }
.bar { display: flex; height: 27px; border-top: 1px solid #fff; border-bottom: 1px solid #808080; }
.bar + .bar { border-bottom: 0; }
.group { display: flex; align-items: center; border-right: 1px solid #808080; }
.group + .group { border-left: 1px solid #fff; }
.grip { width: 3px; height: 20px; margin: 0 3px 0 2px; background: repeating-linear-gradient(#808080 0 1px, transparent 1px 2px); }
.group + .group .grip { margin-right: 2px; }
.sep { width: 1px; height: 21px; margin: 0 2px 0 3px; background: #808080; }
.tb { width: 26px; height: 24px; margin-right: 2px; border: 1px solid transparent; }
.tb.on { border-color: #808080 #fff #fff #808080; background: repeating-conic-gradient(#fff 0 25%, #d4d0c8 0 50%) 0 0 / 2px 2px; }
.tb.drop { width: 34px; gap: 6px; margin-right: 1px; }
.tb.txt { width: 66px; gap: 2px; }
.tb.txt.on { width: 78px; margin-right: 1px; }
.tb.tf { font: 10px/12px "DejaVu Sans", sans-serif; color: #404040; }
.caret { width: 0; height: 0; border: 3px solid transparent; border-top-color: #000; border-bottom: 0; }
.tools { margin-left: auto; display: flex; align-items: center; gap: 14px; padding-right: 8px; }
.chat { width: 18px; height: 14px; border-radius: 8px; background: #f0f0f0; border: 1px solid #999; position: relative; }
.chat b { position: absolute; right: -2px; top: -6px; width: 15px; height: 15px; border-radius: 50%; background: #e0261a; color: #fff; font: 700 11px/15px "Liberation Sans", sans-serif; }

.main { display: flex; flex: 1; min-height: 0; }
.side { width: 224px; flex: none; display: flex; flex-direction: column; }
.side section { display: flex; flex-direction: column; padding: 0 4px 0 3px; border-right: 1px solid #808080; }
.market { flex: none; height: 318px; border-bottom: 1px solid #808080; }
.navi { flex: 1; min-height: 0; border-top: 1px solid #fff; }
.cap { display: flex; height: 13px; flex: none; margin: 0 -2px 1px 0; }
.cap h2 { flex: 1; background: #808080; color: #d4d0c8; padding-left: 3px; line-height: 13px; }
.cap button { width: 14px; margin-left: 2px; font-size: 11px; font-weight: 700; }
.box { display: flex; border: 1px solid #808080; border-right-color: #fff; border-bottom: 1px solid #000; background: #fff; min-height: 0; flex: 1; overflow: hidden; }
.clip { flex: 1; overflow: hidden; height: 100%; }
.quotes { width: 100%; }
.q1 { width: 76px; } .q2 { width: 49px; } .q4 { width: 25px; }
.quotes th { height: 16px; padding: 0 4px; background: #d4d0c8; border-right: 1px solid #808080; border-bottom: 1px solid #808080; text-align: right; line-height: 15px; }
.quotes th:first-child { text-align: left; padding-left: 5px; }
.quotes td { height: 20px; padding: 0 4px 0 0; text-align: right; border-right: 1px solid #c0c0c0; border-bottom: 1px solid #c0c0c0; line-height: 19px; white-space: nowrap; overflow: hidden; }
.quotes td:first-child { text-align: left; padding-left: 4px; color: #000; }
.arr { width: 12px; height: 12px; vertical-align: -2px; margin-right: 4px; }
.a { background: #aaffff; } .b { background: #fff; } .c { background: #e0ffff; }
.blue { color: #0000ff; } .red { color: #ff0000; }
.scroll { width: 16px; flex: none; display: flex; flex-direction: column; background: repeating-conic-gradient(#fff 0 25%, #d4d0c8 0 50%) 0 0 / 2px 2px; }
.scroll button, .thumb { width: 16px; height: 16px; flex: none; background: #d4d0c8; border: 1px solid; border-color: #fff #404040 #404040 #fff; }
.scroll .end { margin-top: auto; }
.t1.thumb { height: 11px; }
.t2.thumb { height: 87px; margin-top: 81px; }
.u, .d { border: 4px solid transparent; border-top: 0; border-bottom-color: #000; }
.d { transform: rotate(180deg); }
.tabs { display: flex; flex: none; height: 20px; padding-left: 2px; color: #404040; }
.tabs button { height: 16px; padding: 0 9px 0 10px; }
.tabs button.cur { background: #fff; color: #000; border: 1px solid #000; border-top: 0; padding: 0 9px; height: 17px; margin-top: -1px; }
.tabs span { line-height: 17px; }
.navi .tabs { height: 24px; }
.tree { flex: 1; min-width: 0; list-style: none; margin: 0; padding: 2px 0 0; overflow: hidden; background: repeating-linear-gradient(#808080 0 1px, transparent 1px 2px) 13px 0 / 1px 100% no-repeat, repeating-linear-gradient(#808080 0 1px, transparent 1px 2px) 34px 0 / 1px 100% no-repeat; }
.tree li { display: flex; align-items: center; height: 18px; white-space: nowrap; padding-left: 34px; }
.tree span { flex: none; }
.dots { width: 11px; flex: none; height: 1px; margin-right: 2px; background: repeating-linear-gradient(90deg, #808080 0 1px, transparent 1px 2px); }
.tree .ic { margin-right: 5px; }

.work { flex: 1; min-width: 0; display: flex; flex-direction: column; }
.chart { position: relative; flex: 1; min-height: 0; display: flex; flex-direction: column; background: #000; padding: 1px 1px 0 3px; border-left: 1px solid #404040; margin-right: 1px; }
.upper { display: flex; flex: 1; min-height: 0; }
.plot { position: relative; flex: 1; border: 1px solid #fff; font: 9px/12px "DejaVu Sans Condensed", "Liberation Sans", sans-serif; color: #fff; }
.canvas { position: absolute; inset: 0; width: 100%; height: 100%; }
.sym, .pos-label { position: absolute; left: 4px; top: 2px; display: flex; align-items: center; gap: 3px; }
.sym i { border: 4px solid transparent; border-top-color: #fff; border-bottom: 0; }
.pos-label { top: 278px; left: 5px; }
.prices { position: relative; width: 45px; flex: none; display: flex; flex-direction: column; padding-top: 14px; color: #fff; font: 9px/33px "DejaVu Sans Condensed", "Liberation Sans", sans-serif; }
.prices span { height: 33px; flex: none; padding-left: 5px; position: relative; }
.prices span::before { content: ""; position: absolute; left: 0; top: 17px; width: 2px; height: 1px; background: #fff; }
.prices strong { position: absolute; left: 2px; top: 284px; width: 39px; padding-left: 3px; background: #fff; color: #000; font-weight: 400; line-height: 11px; }
.dates { height: 20px; flex: none; display: flex; overflow: hidden; color: #fff; font: 9px/19px "DejaVu Sans Condensed", "Liberation Sans", sans-serif; }
.dates span { width: 64px; flex: none; white-space: nowrap; border-left: 1px solid transparent; border-image: linear-gradient(#fff 3px, transparent 3px) 1; }

.sidebtns { position: absolute; left: 277px; top: 0; display: flex; flex-direction: column; gap: 9px; }
.sidebtns button { width: 16px; height: 14px; border: 1px solid #b0c4de; background: #0c0c0c; color: #d4d0c8; font: 12px/12px "Noto Sans Mono CJK SC", monospace; }
.sidebtns button:first-child { border-top: 0; }
.panel { position: absolute; left: 294px; top: 0; width: 931px; border: 1px solid #778899; border-top: 0; background: #242a33; color: #b0c4de; font: 11px/14px "Liberation Sans", "Noto Sans CJK SC", sans-serif; }
.panel header { background: #1c1c1c; height: 40px; }
.ptitle { display: flex; justify-content: space-between; padding: 2px 3px 0; height: 22px; }
.ptitle h3 { color: #ffff00; }
.ptitle a { color: #87cefa; text-decoration: none; }
.ptabs { display: flex; padding-left: 12px; color: #696969; font-size: 12px; }
.ptabs button { width: 18px; height: 16px; margin-right: 4px; }
.ptabs .cur { background: #242a33; color: #b0c4de; }
.ptabs .wide { width: 32px; }
.ptabs .far { margin-left: 53px; }
.curve { display: block; width: 100%; height: 102px; }
.pdates { display: flex; justify-content: space-between; padding: 0 12px 0 117px; height: 15px; line-height: 11px; font-size: 9px; color: #778899; }
.stats { width: 100%; }
.stats th, .stats td { height: 14px; padding: 0 0 0 4px; text-align: left; line-height: 14px; white-space: nowrap; }
.stats th { font-size: 12px; }
.stats tbody tr:first-child td:first-child, .stats tbody tr:last-child td:first-child { font-size: 12px; }
.stats tbody tr:last-child { background: #1c1c1c; }
.stats tbody tr:last-child td { height: 15px; line-height: 15px; }
.s0, .s4, .s9 { width: 80px; } .s1, .s2, .s3 { width: 60px; } .s5, .s6 { width: 70px; } .s7, .s8, .s10 { width: 90px; }
.pos { color: #ff0000; } .neg { color: #00ff7f; }
.nub { position: absolute; right: 0; top: 37px; border: 3px solid transparent; border-right: 4px solid #c8c8c8; border-left: 0; }

.ime { position: absolute; left: 700px; bottom: -13px; display: flex; align-items: center; height: 24px; background: #d4d0c8; z-index: 2; border-left: 1px solid #808080; }
.ime button { width: 28px; height: 22px; border-right: 1px solid #fff; }
.ime b { width: 14px; height: 14px; border-radius: 50%; background: #1436b8; border: 1px solid #8aa; color: #fff; font: 700 10px/12px "Liberation Sans", sans-serif; }
.imeopt { width: 16px; display: flex; flex-direction: column; align-items: center; gap: 7px; }
.imeopt i:first-child { width: 5px; height: 2px; background: #000; }
.ctabs { display: flex; flex: none; height: 23px; border-top: 2px solid #404040; padding-left: 4px; color: #404040; border-bottom: 1px solid #fff; }
.ctabs button { width: 76px; height: 18px; }
.ctabs .cur { background: #fff; color: #000; border-right: 1px solid #000; border-bottom: 1px solid #000; }
.ctabs span { line-height: 17px; }
.ctabs em { margin-left: auto; padding-right: 8px; font-style: normal; color: #909090; }

.term { display: flex; flex: none; padding: 3px 3px 1px 1px; border-bottom: 1px solid #808080; }
.strip { width: 13px; flex: none; display: flex; flex-direction: column; }
.strip button { height: 13px; font-size: 11px; font-weight: 700; }
.vcap { flex: 1; width: 11px; background: #0a246a; color: #fff; writing-mode: vertical-rl; text-orientation: sideways; transform: rotate(180deg); font-size: 11px; line-height: 11px; }
.tbody { flex: 1; min-width: 0; display: flex; flex-direction: column; border-left: 1px solid #808080; border-top: 1px solid #808080; }
.orders { width: 100%; background: #fff; }
.o1 { width: 153px; } .o2 { width: 212px; } .o3 { width: 106px; } .o4 { width: 82px; } .o5 { width: 106px; } .o6 { width: 118px; } .o7, .o8, .o9, .o10, .o11 { width: 118px; } .o12 { width: 176px; }
.orders th { height: 16px; background: #d4d0c8; border: 1px solid #808080; border-width: 0 1px 2px 0; text-align: right; padding: 0 5px 0; line-height: 14px; }
.orders th:first-child { text-align: left; }
.orders th i { font-style: normal; color: #fff; margin-left: 9px; }
.orders td { height: 19px; border-right: 1px solid #c0c0c0; text-align: right; padding: 0 3px; line-height: 18px; white-space: nowrap; }
.orders td:first-child { text-align: left; }
.orders td .ic { display: inline-block; vertical-align: -4px; margin-right: 4px; width: 15px; height: 15px; }
.orders td button { margin: 0 2px 0 8px; color: #808080; font-weight: 700; line-height: 14px; }
.orders .sum { background: #c8c8c8; font-weight: 700; font-size: 14px; }
.orders .sum td { border: 0; height: 20px; line-height: 20px; }
.orders .sum td:nth-child(2) { padding-right: 23px; }
.sum div { display: flex; gap: 11px; align-items: center; }
.upbox { width: 12px; height: 14px; background: #f4f4f4; border: 1px solid #777; margin-right: -4px; display: flex; align-items: center; justify-content: center; }
.upbox svg { width: 9px; height: 9px; }
.fill { height: 195px; background: #fff; }
.tabs.wide { border-top: 1px solid #000; height: 21px; }
.tabs.wide button { padding: 0 7px; }
.tabs.wide .cur { width: 44px; margin-right: 2px; }
.tabs.wide > span { width: 6px; text-align: center; }
.tabs.wide sub { color: #ff1a1a; font: 700 9px/10px "DejaVu Sans", sans-serif; align-self: flex-end; }

.status { display: flex; flex: none; height: 25px; align-items: center; border-top: 1px solid #fff; }
.status span { height: 18px; line-height: 18px; border-left: 1px solid #808080; box-shadow: inset 1px 0 #fff; padding-left: 3px; flex: none; }
.status .help { flex: 1; border: 0; box-shadow: none; padding-left: 2px; }
.prof { width: 164px; } .w1 { width: 115px; } .w2 { width: 86px; }
.status .conn { width: 160px; display: flex; align-items: center; gap: 3px; padding-left: 5px; }
.status .conn::after { content: ""; width: 14px; height: 14px; margin: 4px 0 0 auto; background: repeating-linear-gradient(135deg, #808080 0 2px, #fff 2px 3px, #d4d0c8 3px 4px); clip-path: polygon(100% 0, 100% 100%, 0 100%); }
.conn svg { width: 24px; height: 13px; }

.task { display: flex; align-items: center; flex: none; height: 43px; border-top: 1px solid #fff; padding: 0 2px; gap: 2px; }
.task button { height: 38px; border: 1px solid; border-color: #fff #404040 #404040 #fff; box-shadow: inset -1px -1px #808080; }
.task .start { width: 47px; margin-right: 7px; gap: 2px; }
.task .app-btn { width: 48px; }
.app-btn svg { width: 28px; height: 30px; }
.vt { position: relative; width: 32px; height: 32px; background: #fff; color: #0c1240; font: 700 25px/30px "Open Sans", "Noto Sans", sans-serif; text-align: center; }
.vt i { position: absolute; right: 2px; bottom: 5px; width: 4px; height: 4px; border-radius: 50%; background: #18c8e8; }
.tray { margin-left: auto; display: flex; align-items: center; height: 38px; width: 150px; padding: 0 2px 0 3px; border: 1px solid; border-color: #808080 #fff #fff #808080; }
.chev { width: 10px; height: 13px; margin-right: 8px; }
.tray time { margin-left: auto; text-align: center; line-height: 16px; margin-right: 2px; }
.mark-layer { position: fixed; inset: 0; width: 100%; height: 100%; pointer-events: none; z-index: 9; }
.mark-layer text { font: 700 37px "Liberation Sans", sans-serif; fill: rgba(255, 255, 255, .09); stroke: rgba(70, 70, 70, .26); stroke-width: 1px; stroke-linejoin: round; }
</style>
